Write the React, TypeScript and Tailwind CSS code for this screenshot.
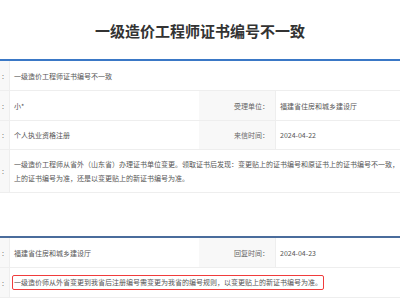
const font = { fontFamily: '"Noto Sans CJK SC", "Noto Sans", sans-serif' };

const Label = ({ text, narrow }: { text: string; narrow?: boolean }) => (
  <div
    className={
      "flex items-center justify-end overflow-hidden whitespace-nowrap bg-[#f8f8f8] border-r border-[#eeeeee] text-[#666] " +
      (narrow ? "pr-[5px]" : "pr-[6px]")
    }
  >
    <span>{text}</span>
  </div>
);

const Value = ({ children, span }: { children: React.ReactNode; span?: boolean }) => (
  <div
    className={
      "flex items-center overflow-hidden whitespace-nowrap pl-[4px] text-[#555] " +
      (span ? "col-span-3" : "")
    }
  >
    {children}
  </div>
);

const Row = ({ children, h }: { children: React.ReactNode; h: string }) => (
  <div className={"grid grid-cols-[10px_189px_77px_1fr] border-b border-[#eeeeee] " + h}>
    {children}
  </div>
);

export default function App() {
  return (
    <div className="w-[400px] h-[300px] overflow-hidden bg-white text-[7px] leading-[14px]" style={font}>
      <div className="h-[59px] flex items-center justify-center">
        <h1 className="text-[15px] leading-[20px] font-bold text-[#333] pt-[2px]">一级造价工程师证书编号不一致</h1>
      </div>

      <div className="border-t-2 border-[#3a78c6]">
        <Row h="h-[30px]">
          <Label text=":" narrow />
          <Value span>一级造价工程师证书编号不一致</Value>
        </Row>
        <Row h="h-[30px]">
          <Label text=":" narrow />
          <Value>小*</Value>
          <Label text="受理单位：" />
          <Value>福建省住房和城乡建设厅</Value>
        </Row>
        <Row h="h-[29px]">
          <Label text=":" narrow />
          <Value>个人执业资格注册</Value>
          <Label text="来信时间：" />
          <Value>2024-04-22</Value>
        </Row>
        <Row h="h-[43px]">
          <Label text=":" narrow />
          <div className="col-span-3 flex flex-col justify-center overflow-hidden whitespace-nowrap pl-[4px] text-[#555]">
            <div>一级造价工程师从省外（山东省）办理证书单位变更。领取证书后发现：变更贴上的证书编号和原证书上的证书编号不一致，</div>
            <div>上的证书编号为准，还是以变更贴上的新证书编号为准。</div>
          </div>
        </Row>
      </div>

      <div className="mt-[43px] border-t-2 border-[#4a6c9c]">
        <Row h="h-[30px]">
          <Label text=":" narrow />
          <Value>福建省住房和城乡建设厅</Value>
          <Label text="回复时间：" />
          <Value>2024-04-23</Value>
        </Row>
        <Row h="h-[30px]">
          <Label text=":" narrow />
          <Value span>
            <span className="-ml-[2px] px-[1px] border border-[#f03c3c] rounded-[2px] leading-[13px]">
              一级造价师从外省变更到我省后注册编号需变更为我省的编号规则，以变更贴上的新证书编号为准。
            </span>
          </Value>
        </Row>
      </div>
    </div>
  );
}
